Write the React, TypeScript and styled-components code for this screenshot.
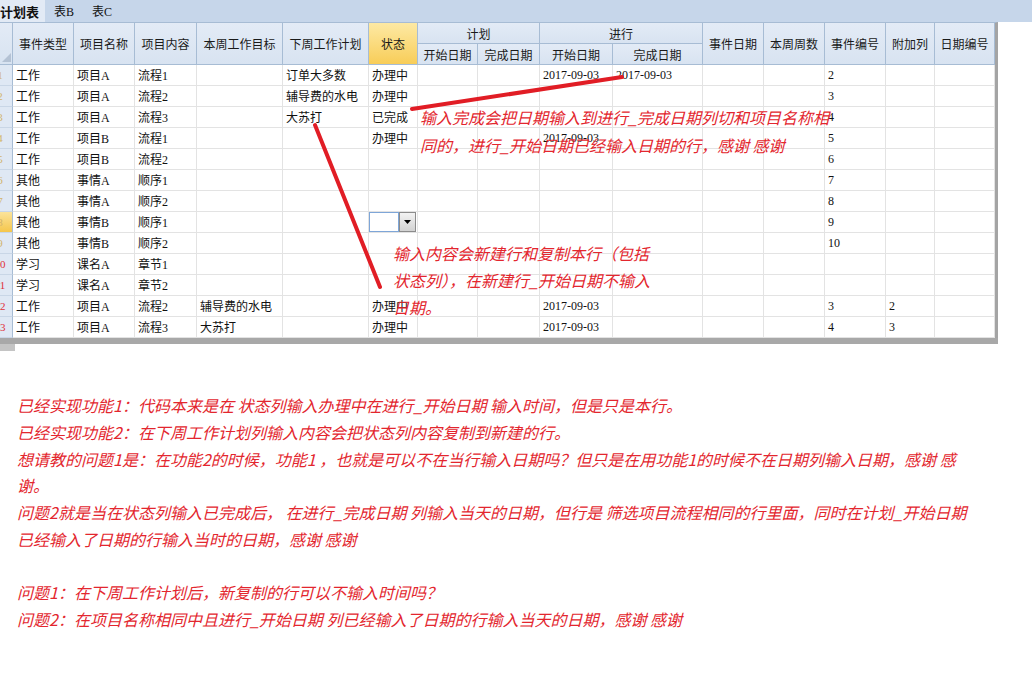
import styled, { createGlobalStyle } from 'styled-components';

const GlobalStyle = createGlobalStyle`
  html, body {
    margin: 0;
    padding: 0;
    background: #fff;
  }
  body {
    font-family: "Noto Sans CJK SC", sans-serif;
  }
`;

const Page = styled.div`
  position: relative;
  width: 1032px;
  height: 687px;
  overflow: hidden;
  background: #fff;
`;

const TabBar = styled.div`
  height: 22px;
  display: flex;
  background: #c6d6ea;
`;

const Tab = styled.div<{ $active?: boolean }>`
  display: flex;
  align-items: center;
  padding: ${(p) => (p.$active ? '0 6px 0 0' : '0 9px')};
  background: ${(p) => (p.$active ? '#e2eaf5' : 'transparent')};
  font-family: "Liberation Serif", "Noto Sans CJK SC", serif;
  font-size: ${(p) => (p.$active ? '13px' : '12px')};
  font-weight: ${(p) => (p.$active ? 'bold' : 'normal')};
  color: #111;
  white-space: nowrap;
`;

const Sheet = styled.div`
  width: 998px;
`;

const Grid = styled.div`
  display: grid;
  grid-template-columns: 13px 61px 61px 62px 86px 86px 49px 60px 62px 73px 90px 61px 61px 61px 49px 60px;
  grid-auto-rows: 21px;
  width: 998px;
  box-sizing: border-box;
  border-right: 3px solid #a4a4a4;
  border-top: 1px solid #a7bcd4;
`;

const HeadCell = styled.div<{ $rows?: number; $cols?: number; $hl?: boolean }>`
  grid-row: span ${(p) => p.$rows ?? 1};
  grid-column: span ${(p) => p.$cols ?? 1};
  display: flex;
  align-items: center;
  justify-content: center;
  box-sizing: border-box;
  border-right: 1px solid #a7bcd4;
  border-bottom: 1px solid #a7bcd4;
  background: ${(p) =>
    p.$hl ? 'linear-gradient(#fde9a4, #f8cd58)' : 'linear-gradient(#e3ebf6, #d8e3f1)'};
  font-size: 12px;
  color: #1a1a1a;
  white-space: nowrap;
`;

const Corner = styled(HeadCell)`
  align-items: flex-end;
  justify-content: flex-end;
  padding: 0 1px 2px 0;
`;

const RowHead = styled.div<{ $selected?: boolean; $red?: boolean }>`
  display: flex;
  justify-content: flex-end;
  align-items: center;
  overflow: hidden;
  box-sizing: border-box;
  border-right: 1px solid #a7bcd4;
  border-bottom: 1px solid #c9d6e6;
  background: ${(p) => (p.$selected ? 'linear-gradient(#fbe39a, #f5c64c)' : '#dfe8f4')};
  color: ${(p) => (p.$red ? '#e0303a' : '#d2b46c')};
  font-family: "Liberation Serif", serif;
  font-size: 11px;
`;

const RowNum = styled.span`
  flex-shrink: 0;
  width: 24px;
  text-align: center;
`;

const Cell = styled.div`
  display: flex;
  align-items: center;
  box-sizing: border-box;
  padding-left: 3px;
  border-right: 1px solid #e3e3e3;
  border-bottom: 1px solid #e3e3e3;
  font-family: "Liberation Serif", "Noto Sans CJK SC", serif;
  font-size: 12px;
  color: #111;
  white-space: nowrap;
  overflow: visible;
`;

const EditorCell = styled(Cell)`
  padding: 0 1px 0 0;
  align-items: stretch;
`;

const EditorBox = styled.div`
  flex: 1;
  box-sizing: border-box;
  border: 1px solid #7ea6d8;
  background: #fff;
`;

const DropButton = styled.div`
  width: 17px;
  box-sizing: border-box;
  display: flex;
  align-items: center;
  justify-content: center;
  border: 1px solid #8c8c8c;
  background: linear-gradient(#f3f3f3, #d2d2d2);
`;

const BottomBar = styled.div`
  height: 6px;
  width: 998px;
  background: #a8a8a8;
`;

const ScrollStub = styled.div`
  height: 7px;
  width: 15px;
  background: #c4c4c4;
`;

const Notes = styled.div`
  padding: 41px 0 0 17px;
`;

const NoteLine = styled.div`
  height: 26.75px;
  line-height: 26.75px;
  font-size: 16px;
  font-style: italic;
  color: #e3262e;
  white-space: nowrap;
`;

const Overlay = styled.svg`
  position: absolute;
  left: 0;
  top: 0;
  pointer-events: none;
`;

const Callout = styled.div<{ $x: number; $y: number; $lh: number }>`
  position: absolute;
  left: ${(p) => p.$x}px;
  top: ${(p) => p.$y}px;
  font-size: 16px;
  font-style: italic;
  line-height: ${(p) => p.$lh}px;
  color: #e3262e;
  white-space: nowrap;
`;

type Row = string[];

const rows: Row[] = [
  ['工作', '项目A', '流程1', '', '订单大多数', '办理中', '', '', '2017-09-03', '2017-09-03', '', '', '2', '', ''],
  ['工作', '项目A', '流程2', '', '辅导费的水电', '办理中', '', '', '', '', '', '', '3', '', ''],
  ['工作', '项目A', '流程3', '', '大苏打', '已完成', '', '', '', '', '', '', '4', '', ''],
  ['工作', '项目B', '流程1', '', '', '办理中', '', '', '2017-09-03', '', '', '', '5', '', ''],
  ['工作', '项目B', '流程2', '', '', '', '', '', '', '', '', '', '6', '', ''],
  ['其他', '事情A', '顺序1', '', '', '', '', '', '', '', '', '', '7', '', ''],
  ['其他', '事情A', '顺序2', '', '', '', '', '', '', '', '', '', '8', '', ''],
  ['其他', '事情B', '顺序1', '', '', '#edit', '', '', '', '', '', '', '9', '', ''],
  ['其他', '事情B', '顺序2', '', '', '', '', '', '', '', '', '', '10', '', ''],
  ['学习', '课名A', '章节1', '', '', '', '', '', '', '', '', '', '', '', ''],
  ['学习', '课名A', '章节2', '', '', '', '', '', '', '', '', '', '', '', ''],
  ['工作', '项目A', '流程2', '辅导费的水电', '', '办理中', '', '', '2017-09-03', '', '', '', '3', '2', ''],
  ['工作', '项目A', '流程3', '大苏打', '', '办理中', '', '', '2017-09-03', '', '', '', '4', '3', ''],
];

const notes = [
  '已经实现功能1：代码本来是在 状态列输入办理中在进行_开始日期 输入时间，但是只是本行。',
  '已经实现功能2：在下周工作计划列输入内容会把状态列内容复制到新建的行。',
  '想请教的问题1是：在功能2的时候，功能1 ，也就是可以不在当行输入日期吗？但只是在用功能1的时候不在日期列输入日期，感谢 感',
  '谢。',
  '问题2就是当在状态列输入已完成后， 在进行_完成日期 列输入当天的日期，但行是 筛选项目流程相同的行里面，同时在计划_开始日期',
  '已经输入了日期的行输入当时的日期，感谢 感谢',
  '',
  '问题1：在下周工作计划后，新复制的行可以不输入时间吗？',
  '问题2：在项目名称相同中且进行_开始日期 列已经输入了日期的行输入当天的日期，感谢 感谢',
];

function App() {
  return (
    <Page>
      <GlobalStyle />
      <TabBar>
        <Tab $active>计划表</Tab>
        <Tab>表B</Tab>
        <Tab>表C</Tab>
      </TabBar>
      <Sheet>
        <Grid>
          <Corner $rows={2}>
            <svg width="9" height="9" viewBox="0 0 9 9">
              <polygon points="9,0 9,9 0,9" fill="#b4c2d4" />
            </svg>
          </Corner>
          <HeadCell $rows={2}>事件类型</HeadCell>
          <HeadCell $rows={2}>项目名称</HeadCell>
          <HeadCell $rows={2}>项目内容</HeadCell>
          <HeadCell $rows={2}>本周工作目标</HeadCell>
          <HeadCell $rows={2}>下周工作计划</HeadCell>
          <HeadCell $rows={2} $hl>状态</HeadCell>
          <HeadCell $cols={2}>计划</HeadCell>
          <HeadCell $cols={2}>进行</HeadCell>
          <HeadCell $rows={2}>事件日期</HeadCell>
          <HeadCell $rows={2}>本周周数</HeadCell>
          <HeadCell $rows={2}>事件编号</HeadCell>
          <HeadCell $rows={2}>附加列</HeadCell>
          <HeadCell $rows={2}>日期编号</HeadCell>
          <HeadCell>开始日期</HeadCell>
          <HeadCell>完成日期</HeadCell>
          <HeadCell>开始日期</HeadCell>
          <HeadCell>完成日期</HeadCell>
          {rows.map((row, i) => [
            <RowHead key={`h${i}`} $selected={i === 7} $red={i >= 9}>
              <RowNum>{i + 1}</RowNum>
            </RowHead>,
            ...row.map((v, j) =>
              v === '#edit' ? (
                <EditorCell key={`${i}-${j}`}>
                  <EditorBox />
                  <DropButton>
                    <svg width="7" height="4" viewBox="0 0 7 4">
                      <polygon points="0,0 7,0 3.5,4" fill="#000" />
                    </svg>
                  </DropButton>
                </EditorCell>
              ) : (
                <Cell key={`${i}-${j}`}>{v}</Cell>
              )
            ),
          ])}
        </Grid>
        <BottomBar />
        <ScrollStub />
      </Sheet>
      <Notes>
        {notes.map((n, i) => (
          <NoteLine key={i}>{n}</NoteLine>
        ))}
      </Notes>

      <Overlay width="1032" height="687">
        <line x1="412" y1="109" x2="622" y2="77" stroke="#e11d25" strokeWidth="4" strokeLinecap="round" />
        <line x1="315" y1="125" x2="380" y2="287" stroke="#e11d25" strokeWidth="4" strokeLinecap="round" />
      </Overlay>
      <Callout $x={420} $y={103} $lh={28}>
        <div>输入完成会把日期输入到进行_完成日期列切和项目名称相</div>
        <div>同的，进行_开始日期已经输入日期的行，感谢 感谢</div>
      </Callout>
      <Callout $x={393} $y={240} $lh={27}>
        <div>输入内容会新建行和复制本行（包括</div>
        <div>状态列），在新建行_开始日期不输入</div>
        <div>日期。</div>
      </Callout>
    </Page>
  );
}

export default App;
